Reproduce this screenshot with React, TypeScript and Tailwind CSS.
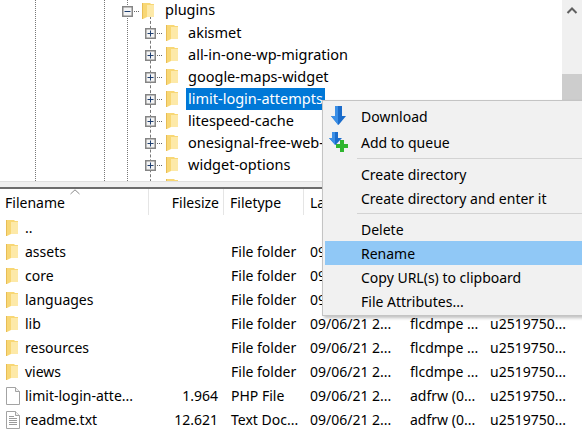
const treeRows = [
  { name: 'akismet' },
  { name: 'all-in-one-wp-migration' },
  { name: 'google-maps-widget' },
  { name: 'limit-login-attempts', selected: true },
  { name: 'litespeed-cache' },
  { name: 'onesignal-free-web-' },
  { name: 'widget-options' },
];

const files = [
  { name: '..', icon: 'folder' },
  { name: 'assets', type: 'File folder', date: '09', icon: 'folder' },
  { name: 'core', type: 'File folder', date: '09', icon: 'folder' },
  { name: 'languages', type: 'File folder', date: '09', icon: 'folder' },
  { name: 'lib', type: 'File folder', date: '09/06/21 2...', perm: 'flcdmpe ...', owner: 'u2519750...', icon: 'folder' },
  { name: 'resources', type: 'File folder', date: '09/06/21 2...', perm: 'flcdmpe ...', owner: 'u2519750...', icon: 'folder' },
  { name: 'views', type: 'File folder', date: '09/06/21 2...', perm: 'flcdmpe ...', owner: 'u2519750...', icon: 'folder' },
  { name: 'limit-login-atte...', size: '1.964', type: 'PHP File', date: '09/06/21 2...', perm: 'adfrw (0...', owner: 'u2519750...', icon: 'file' },
  { name: 'readme.txt', size: '12.621', type: 'Text Doc...', date: '09/06/21 2...', perm: 'adfrw (0...', owner: 'u2519750...', icon: 'text' },
];

const FolderIcon = () => (
  <svg width="12" height="16" viewBox="0 0 12 16" className="shrink-0">
    <path d="M0 0h8l1 1h3v13H5l-4 2H0z" fill="#f8d775" />
    <path d="M5 2h7v12H5z" fill="#fde9a8" />
    <path d="M0 0h1v16H0z" fill="#e8bd55" />
  </svg>
);

const FileIcon = ({ lines }: { lines?: boolean }) => (
  <svg width="14" height="18" viewBox="0 0 14 18" className="shrink-0">
    <path d="M.5.5h9l4 4v13H.5z" fill="#fff" stroke="#a3a3a3" />
    <path d="M9.500.5v4h4" fill="#f0f0f0" stroke="#a3a3a3" />
    {lines && <path d="M3 5.500h5M3 7.500h8M3 9.500h8M3 11.500h8M3 13.500h8" stroke="#9a9a9a" />}
  </svg>
);

const Expander = ({ open }: { open?: boolean }) => (
  <svg width="11" height="11" viewBox="0 0 11 11" className="mt-px shrink-0">
    <rect x=".75" y=".75" width="9.5" height="9.5" fill="#f4f4f4" stroke="#858585" strokeWidth="1.5" />
    <path d={open ? 'M2.500 5.500h6' : 'M2.500 5.500h6M5.500 2.500v6'} stroke="#1f3f70" />
  </svg>
);

const Dots = () => <div className="mx-px w-[5px] border-t border-dotted border-[#666]" />;

const DownloadIcon = () => (
  <svg width="24" height="24" viewBox="0 0 24 24">
    <path d="M6 1h7v10h4l-7.500 9L2 11h4z" fill="#1a6ccb" />
    <path d="M6 1h3v19l-7-9h4z" fill="#3b8fe6" />
  </svg>
);

const QueueIcon = () => (
  <svg width="24" height="24" viewBox="0 0 24 24">
    <path d="M3 1h6v6h4l-6.500 7L0 7h3z" fill="#1a6ccb" />
    <path d="M3 1h3v13L0 7h3z" fill="#3b8fe6" />
    <path d="M7 13h4V9h4v4h4v4h-4v4h-4v-4H7z" fill="#2fb52f" />
  </svg>
);

function MenuItem({ label, active, tall, low, children }: { label: string; active?: boolean; tall?: boolean; low?: boolean; children?: React.ReactNode }) {
  return (
    <div className={`flex items-center ${tall ? 'h-[26px]' : 'h-6'} ${active ? 'bg-[#90c8f6]' : ''}`}>
      <div className="flex w-[32px] justify-center">{children}</div>
      <span className={`pl-[4px] ${low ? '' : 'pb-[2px]'}`}>{label}</span>
    </div>
  );
}

const Separator = ({ bottom }: { bottom: string }) => (
  <div className={`mt-[2px] ml-[32px] h-px bg-[#d3d3d3] ${bottom}`} />
);

export default function App() {
  return (
    <div className="relative h-[442px] w-[582px] overflow-hidden bg-white font-['Noto_Sans',sans-serif] text-[14px] text-black">
      {/* directory tree */}
      <div className="relative flex h-[181px] overflow-hidden text-[14.5px]">
        <div className="absolute left-[35px] top-0 h-full border-l border-dotted border-[#777]" />
        <div className="absolute left-[104px] top-0 h-full border-l border-dotted border-[#777]" />
        <div className="absolute left-[127px] top-0 h-full border-l border-dotted border-[#777]" />
        <div className="absolute left-[150px] top-[16px] h-full border-l border-dashed border-[#777]" />
        <div className="relative flex-1 pl-[122px]">
          <div className="flex h-[22px] items-center">
            <Expander open />
            <Dots />
            <span className="ml-[2px] flex"><FolderIcon /></span>
            <span className="ml-[11px] pb-[2px]">plugins</span>
          </div>
          <div className="pl-[23px]">
            {treeRows.map(row => (
              <div key={row.name} className="flex h-[22px] items-center">
                <Expander />
                <Dots />
                <span className="ml-[3px] flex"><FolderIcon /></span>
                <span
                  className={`ml-[8px] whitespace-nowrap px-[2px] pb-[2px] leading-[20px] ${
                    row.selected ? 'bg-[#0078d7] text-white' : ''
                  }`}
                >
                  {row.name}
                </span>
              </div>
            ))}
            <div className="flex h-[22px] items-center pl-[21px]"><FolderIcon /></div>
          </div>
        </div>
        <div className="flex w-5 shrink-0 flex-col items-center bg-[#f0f0f0]">
          <svg width="12" height="8" viewBox="0 0 12 8" className="mt-[6px] mb-[60px] shrink-0">
            <path d="M1.500 7 6 2.500 10.500 7" fill="none" stroke="#606060" strokeWidth="2" />
          </svg>
          <div className="h-[27px] w-full shrink-0 bg-[#cdcdcd]" />
        </div>
      </div>

      {/* splitter */}
      <div className="h-[8px] border-t border-b-2 border-t-[#e0e0e0] border-b-[#6d6d6d] bg-[#f0f0f0]" />

      {/* file list */}
      <div className="flex h-[26px]">
        <div className="relative w-[149px] border-r border-[#e5e5e5] pt-px pl-[5px] leading-[26px]">
          Filename
          <svg width="10" height="6" viewBox="0 0 10 6" className="absolute left-[70px] top-0">
            <path d="M.5 5 5 .8 9.500 5" fill="none" stroke="#8a8a8a" />
          </svg>
        </div>
        <div className="w-[75px] border-r border-[#e5e5e5] pt-px pr-[4px] text-right leading-[26px]">Filesize</div>
        <div className="w-[80px] border-r border-[#e5e5e5] pt-px pl-[6px] leading-[26px]">Filetype</div>
        <div className="pt-px pl-[6px] leading-[26px]">La</div>
      </div>
      {files.map(file => (
        <div key={file.name} className="flex h-6 items-center whitespace-nowrap">
          <div className="flex w-[149px] items-center pl-[6px]">
            <span className="mt-[2px] flex w-[19px]">
              {file.icon === 'folder' ? <FolderIcon /> : <FileIcon lines={file.icon === 'text'} />}
            </span>
            <span>{file.name}</span>
          </div>
          <div className="w-[69px] text-right">{file.size}</div>
          <div className="w-[80px] pl-[13px]">{file.type}</div>
          <div className="w-[112px] pl-[12px]">{file.date}</div>
          <div className="w-[80px]">{file.perm}</div>
          <div>{file.owner}</div>
        </div>
      ))}

      {/* context menu */}
      <div className="absolute left-[322px] top-[100px] w-[264px] border border-[#c4c4c4] bg-[#f1f1f1] pt-[3px] pb-[2px] pl-[2px] shadow-[2px_2px_3px_rgba(0,0,0,0.25)]">
        <MenuItem label="Download" tall><DownloadIcon /></MenuItem>
        <MenuItem label="Add to queue" tall><QueueIcon /></MenuItem>
        <Separator bottom="mb-[4px]" />
        <MenuItem label="Create directory" />
        <MenuItem label="Create directory and enter it" />
        <Separator bottom="mb-[3px]" />
        <MenuItem label="Delete" low />
        <MenuItem label="Rename" low active />
        <MenuItem label="Copy URL(s) to clipboard" low />
        <MenuItem label="File Attributes..." low />
      </div>
    </div>
  );
}
